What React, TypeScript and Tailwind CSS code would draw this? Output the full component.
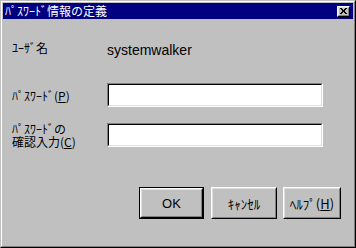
function CloseButton() {
  return (
    <div className="w-[13px] h-[11px] border border-t-white border-l-white border-r-black border-b-black bg-[#c0c0c0]">
      <div className="h-full border border-t-[#dfdfdf] border-l-[#dfdfdf] border-r-[#808080] border-b-[#808080] flex items-center justify-center">
        <svg width="7" height="6" viewBox="0 0 7 6" shapeRendering="crispEdges">
          <path d="M0 0h2v1H0zM5 0h2v1H5zM1 1h2v1H1zM4 1h2v1H4zM2 2h3v2H2zM1 4h2v1H1zM4 4h2v1H4zM0 5h2v1H0zM5 5h2v1H5z" fill="#000" />
        </svg>
      </div>
    </div>
  );
}

function TextBox() {
  return (
    <div className="w-[216px] h-[24px] border border-t-[#808080] border-l-[#808080] border-r-white border-b-white">
      <div className="h-full border border-t-black border-l-black border-r-[#dfdfdf] border-b-[#dfdfdf] bg-white" />
    </div>
  );
}

type ButtonProps = {
  width: string;
  isDefault?: boolean;
  children: React.ReactNode;
};

function Button({ width, isDefault, children }: ButtonProps) {
  return (
    <div className={`${width} h-[32px] bg-[#c0c0c0] ${isDefault ? "border border-black" : ""}`}>
      <div className="h-full border border-t-white border-l-white border-r-black border-b-black">
        <div className="h-full border border-t-[#dfdfdf] border-l-[#dfdfdf] border-r-[#808080] border-b-[#808080] flex items-center justify-center text-black">
          {children}
        </div>
      </div>
    </div>
  );
}

export default function App() {
  return (
    <div className="w-[356px] h-[248px] border border-t-[#c0c0c0] border-l-[#c0c0c0] border-r-black border-b-black bg-[#c0c0c0]">
      <div className="h-full border border-t-white border-l-white border-r-[#808080] border-b-[#808080] p-px flex flex-col">
        <div className="h-[16px] shrink-0 bg-[#000080] flex items-center justify-between pl-[2px] pr-[3px]">
          <span className="text-white text-[12px] leading-none font-['Noto_Sans_CJK_JP',sans-serif]">
            ﾊﾟｽﾜｰﾄﾞ情報の定義
          </span>
          <CloseButton />
        </div>

        <div className="flex-1 flex flex-col pl-[9px] text-black">
          <div className="mt-[17px] h-[24px] flex items-center">
            <div className="w-[95px] text-[12px] leading-none font-['Noto_Sans_CJK_JP',sans-serif]">ﾕｰｻﾞ名</div>
            <div className="text-[14px] leading-none pt-[3px] font-['Liberation_Sans',Arial,sans-serif]">systemwalker</div>
          </div>

          <div className="mt-[23px] h-[24px] flex items-center">
            <div className="w-[95px] text-[12px] leading-none pt-[2px] font-['Noto_Sans_CJK_JP',sans-serif]">
              ﾊﾟｽﾜｰﾄﾞ(<span className="underline underline-offset-1">P</span>)
            </div>
            <TextBox />
          </div>

          <div className="mt-[16px] h-[24px] flex items-center">
            <div className="w-[95px] text-[12px] leading-[13px] font-['Noto_Sans_CJK_JP',sans-serif]">
              <div>ﾊﾟｽﾜｰﾄﾞの</div>
              <div>
                確認入力(<span className="underline underline-offset-1">C</span>)
              </div>
            </div>
            <TextBox />
          </div>

          <div className="mt-[40px] flex pl-[127px]">
            <Button width="w-[65px]" isDefault>
              <span className="text-[13px] leading-none font-['Liberation_Sans',Arial,sans-serif]">OK</span>
            </Button>
            <div className="ml-[7px]">
              <Button width="w-[66px]">
                <span className="text-[13px] leading-none font-['Noto_Sans_CJK_JP',sans-serif]">ｷｬﾝｾﾙ</span>
              </Button>
            </div>
            <div className="ml-[6px]">
              <Button width="w-[58px]">
                <span className="text-[13px] leading-none font-['Noto_Sans_CJK_JP',sans-serif]">
                  ﾍﾙﾌﾟ(<span className="underline underline-offset-1">H</span>)
                </span>
              </Button>
            </div>
          </div>
        </div>
      </div>
    </div>
  );
}
